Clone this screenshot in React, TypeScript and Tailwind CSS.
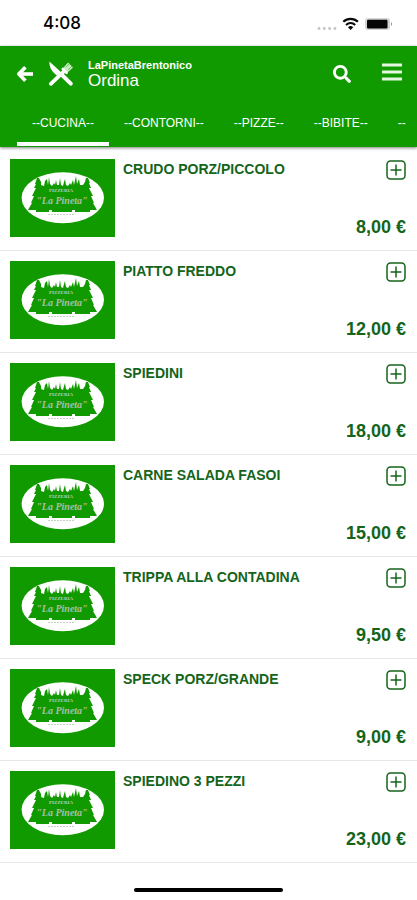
import React from "react";
import { FaSearch } from "react-icons/fa";

const tabs = ["--CUCINA--", "--CONTORNI--", "--PIZZE--", "--BIBITE--", "--"];

const dishes = [
  { name: "CRUDO PORZ/PICCOLO", price: "8,00 €" },
  { name: "PIATTO FREDDO", price: "12,00 €" },
  { name: "SPIEDINI", price: "18,00 €" },
  { name: "CARNE SALADA FASOI", price: "15,00 €" },
  { name: "TRIPPA ALLA CONTADINA", price: "9,50 €" },
  { name: "SPECK PORZ/GRANDE", price: "9,00 €" },
  { name: "SPIEDINO 3 PEZZI", price: "23,00 €" },
];

function StatusIcons() {
  return (
    <svg width="76" height="14" viewBox="0 0 76 14" aria-hidden="true">
      <g fill="#c4c4c4">
        <circle cx="2" cy="11.5" r="1.4" />
        <circle cx="7.3" cy="11.5" r="1.4" />
        <circle cx="12.6" cy="11.5" r="1.4" />
        <circle cx="18" cy="11.5" r="1.4" />
      </g>
      <g fill="none" stroke="#0a0a0a" strokeWidth="2.1">
        <path d="M26.3 4.8a10.6 10.6 0 0 1 14.6 0" />
        <path d="M29 7.9a6.7 6.7 0 0 1 9.2 0" />
      </g>
      <path d="M31 10.2a3.8 3.8 0 0 1 5.2 0l-2.6 2.7z" fill="#0a0a0a" />
      <rect x="48" y="1" width="25" height="12" rx="3" fill="#d4d4d4" />
      <rect x="50" y="2.8" width="20.5" height="8.6" rx="1.2" fill="#050505" />
      <path d="M74 5q2 2 0 4z" fill="#8a8a8a" />
    </svg>
  );
}

function BackArrow() {
  return (
    <svg width="18" height="18" viewBox="0 0 18 18" fill="none" stroke="#fff" strokeWidth="3.6" aria-hidden="true">
      <path d="M9.4 2.2L2.8 9l6.6 6.8" strokeLinejoin="round" />
      <path d="M3.5 9H17" />
    </svg>
  );
}

function Cutlery() {
  return (
    <svg width="26" height="26" viewBox="0 0 26 26" aria-hidden="true">
      <path d="M1.4 0.6L14 12l-3.4 3.6C5 12.400 1 7 1.4 0.600z" fill="#fff" />
      <path d="M13 13l9.800 9.600" stroke="#fff" strokeWidth="4" strokeLinecap="round" />
      <path d="M2.800 22.800L17 9.400" stroke="#fff" strokeWidth="3.800" strokeLinecap="round" />
      <path d="M15 7.200l5-5.800 5 5-5.400 5c-2 1.200-6-2.200-4.600-4.200z" fill="#c9ecc2" />
      <path d="M18 6.400l3.600-4M20.200 8.600l4-3.600" stroke="#4db53f" strokeWidth="0.8" />
      <path d="M14.800 8l3.800 3.800" stroke="#fff" strokeWidth="2.600" strokeLinecap="round" />
    </svg>
  );
}

function Logo() {
  return (
    <svg className="h-[78px] w-[105px] shrink-0" viewBox="0 0 105 78" role="img" aria-label="La Pineta">
      <rect width="105" height="78" fill="#119a00" />
      <ellipse cx="52.800" cy="38.800" rx="41.200" ry="25.500" fill="#fff" />
      <path
        d="M18 51L22 44H21L24 37H22L26 29H24L26 25H25L27 19L29 19L31 23L31 26L34 27L35 22L37 20L38 26L39 18L40 25L42 27L44 24L45 26L46 21L47 26L49 26L50 19L51 26L53 27L54 23L55 20L56 26L58 27L60 24L61 26L63 21L64 26L66 17L67 25L69 20L70 26L73 26L75 23L76 19L78 19L80 24H79L81 29H79L83 37H81L84 44H83L87 51H80V53H65V51H62V53H42V51H39V53H26V51Z"
        fill="#119a00"
      />
      <text x="51" y="33" textAnchor="middle" fontSize="5" fontWeight="700" fill="#b7ccb2" className="font-['Liberation_Serif',serif]">
        PIZZERIA
      </text>
      <text x="52" y="45" textAnchor="middle" fontSize="10" fontStyle="italic" fontWeight="700" fill="#a9bfa6" className="font-['Liberation_Serif',serif]">
        "La Pineta"
      </text>
      <path d="M38 55.500h27" stroke="#b5c4b2" strokeWidth="0.800" strokeDasharray="2 1" />
    </svg>
  );
}

export default function App() {
  return (
    <div className="flex min-h-screen flex-col bg-white font-['Liberation_Sans',Arial,sans-serif]">
      <div className="flex h-[46px] items-center justify-between pt-0.5 pr-6 pl-[43px]">
        <span className="font-['Inter',sans-serif] text-[17px] font-medium text-black">4:08</span>
        <StatusIcons />
      </div>

      <header className="bg-[#119a00] pb-px text-white shadow-[0_1px_3px_rgba(0,0,0,0.5)]">
        <div className="flex h-14 items-center pr-[15px] pl-4">
          <button type="button" aria-label="Indietro">
            <BackArrow />
          </button>
          <span className="ml-3.5">
            <Cutlery />
          </span>
          <div className="ml-3.5 flex-1 pt-0.5">
            <p className="text-[11px] leading-3 font-bold">LaPinetaBrentonico</p>
            <h1 className="text-[17px] leading-5">Ordina</h1>
          </div>
          <button type="button" aria-label="Cerca" className="mr-[31px]">
            <FaSearch size={18} />
          </button>
          <button type="button" aria-label="Menu" className="pb-1">
            <svg width="20" height="18" viewBox="0 0 20 18" aria-hidden="true">
              <path d="M0 2h20M0 9h20M0 16h20" stroke="#e6f7e0" strokeWidth="3" />
            </svg>
          </button>
        </div>
        <nav className="flex overflow-hidden pl-[17px]">
          {tabs.map((tab, i) => (
            <button
              key={tab}
              type="button"
              className={`h-11 shrink-0 border-b-4 px-[15px] pt-0.5 text-xs whitespace-nowrap ${i === 0 ? "border-white" : "border-transparent"}`}
            >
              {tab}
            </button>
          ))}
        </nav>
      </header>

      <ul className="pt-0.5">
        {dishes.map((dish) => (
          <li key={dish.name} className="flex h-[102px] border-b border-[#e6e6ea] pt-2.5 pr-[11px] pl-2.5 text-[#14641a]">
            <Logo />
            <h2 className="ml-2 flex-1 pt-0.5 text-sm leading-4 font-bold">{dish.name}</h2>
            <div className="flex flex-col items-end justify-between pt-px pb-[13px]">
              <button type="button" aria-label={`Aggiungi ${dish.name}`}>
                <svg width="20" height="20" viewBox="0 0 20 20" fill="none" stroke="currentColor" aria-hidden="true">
                  <rect x="1" y="1" width="18" height="18" rx="3.5" strokeWidth="1.5" />
                  <path d="M10 4.500v11M4.500 10h11" strokeWidth="1.5" />
                </svg>
              </button>
              <span className="text-lg leading-5 font-bold">{dish.price}</span>
            </div>
          </li>
        ))}
      </ul>

      <div className="mt-auto mb-2 h-1 w-[149px] self-center rounded-full bg-black" />
    </div>
  );
}
